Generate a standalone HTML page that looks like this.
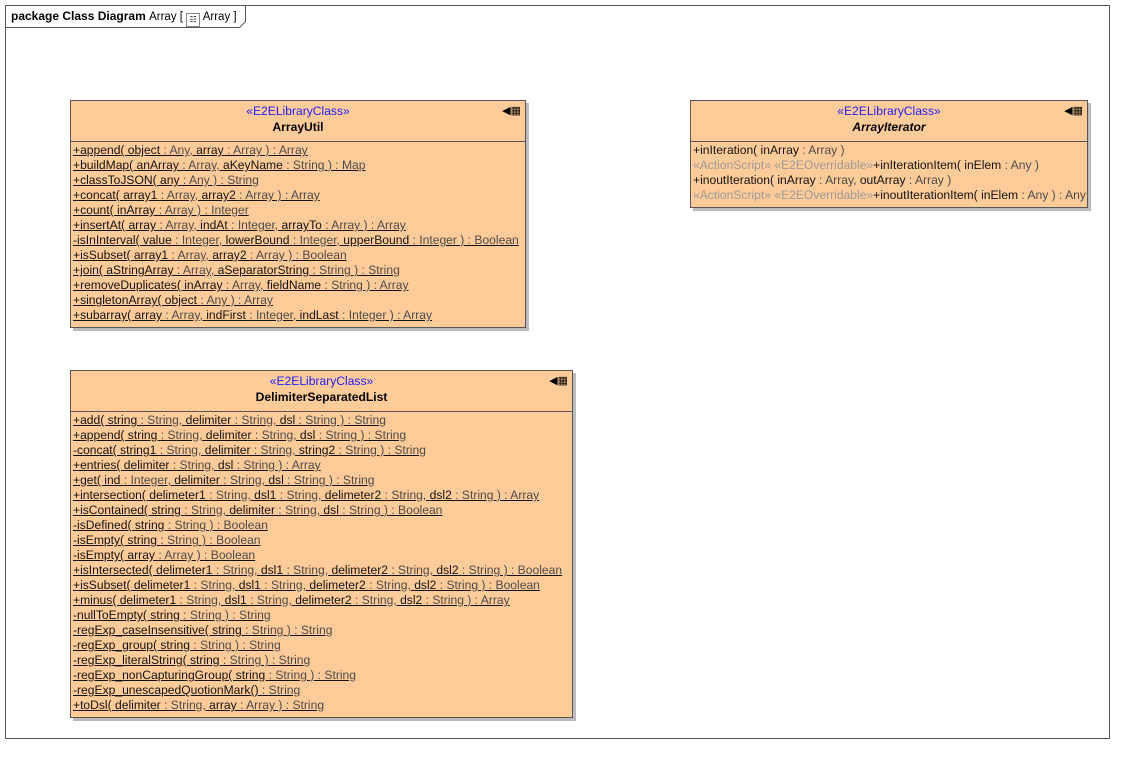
<!DOCTYPE html>
<html><head><meta charset="utf-8"><style>
body{margin:0;width:1134px;height:763px;background:#fff;font-family:"Liberation Sans",Arial,sans-serif;font-size:12.1px;position:relative;overflow:hidden}
.frame{position:absolute;left:5px;top:5px;width:1103px;height:732px;border:1px solid #555}
.tabsvg{position:absolute;left:5px;top:5px}
.tab{position:absolute;left:11px;top:6px;font-size:12px;line-height:20px;white-space:nowrap}
.cls{position:absolute;background:#ffcc99;border:1px solid #555;box-shadow:3px 3px 0 #bbb;box-sizing:border-box}
.hd{height:40px;border-bottom:1px solid #555;text-align:center;position:relative}
.st{color:#1a1aff;padding-top:3px;line-height:15px}
.nm{font-weight:bold;line-height:17px;color:#000}
.ic{position:absolute;right:4px;top:3px;font-size:11px}
.rows{padding:1px 0 0 2px}
.r{line-height:15px;height:15px;white-space:nowrap;color:#111}
.u{text-decoration:underline}
.g{color:#4a4a4a}
.s{color:#999}
</style></head><body>
<div class="frame"></div>
<svg class="tabsvg" width="245" height="24"><polyline points="0.5,22.5 234.5,22.5 240.5,16.5 240.5,0" fill="none" stroke="#555"/></svg>
<div class="tab"><b>package Class Diagram</b> <span style="font-size:11.5px">Array [ <span style="display:inline-block;width:12px;height:12px;border:1px solid #888;vertical-align:-2px;font-size:8px;line-height:12px;text-align:center">&#9783;</span> Array ]</span></div>

<div class="cls" style="left:70px;top:100px;width:456px;height:228px">
<div class="hd"><div class="st">«E2ELibraryClass»</div><div class="nm">ArrayUtil</div><div class="ic">&#9664;&#9638;</div></div>
<div class="rows">
<div class="r u">+append( object <span class="g">: Any, </span>array <span class="g">: Array ) : Array</span></div>
<div class="r u">+buildMap( anArray <span class="g">: Array, </span>aKeyName <span class="g">: String ) : Map</span></div>
<div class="r u">+classToJSON( any <span class="g">: Any ) : String</span></div>
<div class="r u">+concat( array1 <span class="g">: Array, </span>array2 <span class="g">: Array ) : Array</span></div>
<div class="r u">+count( inArray <span class="g">: Array ) : Integer</span></div>
<div class="r u">+insertAt( array <span class="g">: Array, </span>indAt <span class="g">: Integer, </span>arrayTo <span class="g">: Array ) : Array</span></div>
<div class="r u">-isInInterval( value <span class="g">: Integer, </span>lowerBound <span class="g">: Integer, </span>upperBound <span class="g">: Integer ) : Boolean</span></div>
<div class="r u">+isSubset( array1 <span class="g">: Array, </span>array2 <span class="g">: Array ) : Boolean</span></div>
<div class="r u">+join( aStringArray <span class="g">: Array, </span>aSeparatorString <span class="g">: String ) : String</span></div>
<div class="r u">+removeDuplicates( inArray <span class="g">: Array, </span>fieldName <span class="g">: String ) : Array</span></div>
<div class="r u">+singletonArray( object <span class="g">: Any ) : Array</span></div>
<div class="r u">+subarray( array <span class="g">: Array, </span>indFirst <span class="g">: Integer, </span>indLast <span class="g">: Integer ) : Array</span></div>
</div></div>

<div class="cls" style="left:690px;top:100px;width:398px;height:108px">
<div class="hd"><div class="st">«E2ELibraryClass»</div><div class="nm"><i>ArrayIterator</i></div><div class="ic">&#9664;&#9638;</div></div>
<div class="rows">
<div class="r">+inIteration( inArray <span class="g">: Array )</span></div>
<div class="r"><span class="s">«ActionScript» «E2EOverridable»</span>+inIterationItem( inElem <span class="g">: Any )</span></div>
<div class="r">+inoutIteration( inArray <span class="g">: Array, </span>outArray <span class="g">: Array )</span></div>
<div class="r"><span class="s">«ActionScript» «E2EOverridable»</span>+inoutIterationItem( inElem <span class="g">: Any ) : Any</span></div>
</div></div>

<div class="cls" style="left:70px;top:370px;width:503px;height:348px">
<div class="hd"><div class="st">«E2ELibraryClass»</div><div class="nm">DelimiterSeparatedList</div><div class="ic">&#9664;&#9638;</div></div>
<div class="rows">
<div class="r u">+add( string <span class="g">: String, </span>delimiter <span class="g">: String, </span>dsl <span class="g">: String ) : String</span></div>
<div class="r u">+append( string <span class="g">: String, </span>delimiter <span class="g">: String, </span>dsl <span class="g">: String ) : String</span></div>
<div class="r u">-concat( string1 <span class="g">: String, </span>delimiter <span class="g">: String, </span>string2 <span class="g">: String ) : String</span></div>
<div class="r u">+entries( delimiter <span class="g">: String, </span>dsl <span class="g">: String ) : Array</span></div>
<div class="r u">+get( ind <span class="g">: Integer, </span>delimiter <span class="g">: String, </span>dsl <span class="g">: String ) : String</span></div>
<div class="r u">+intersection( delimeter1 <span class="g">: String, </span>dsl1 <span class="g">: String, </span>delimeter2 <span class="g">: String, </span>dsl2 <span class="g">: String ) : Array</span></div>
<div class="r u">+isContained( string <span class="g">: String, </span>delimiter <span class="g">: String, </span>dsl <span class="g">: String ) : Boolean</span></div>
<div class="r u">-isDefined( string <span class="g">: String ) : Boolean</span></div>
<div class="r u">-isEmpty( string <span class="g">: String ) : Boolean</span></div>
<div class="r u">-isEmpty( array <span class="g">: Array ) : Boolean</span></div>
<div class="r u">+isIntersected( delimeter1 <span class="g">: String, </span>dsl1 <span class="g">: String, </span>delimeter2 <span class="g">: String, </span>dsl2 <span class="g">: String ) : Boolean</span></div>
<div class="r u">+isSubset( delimeter1 <span class="g">: String, </span>dsl1 <span class="g">: String, </span>delimeter2 <span class="g">: String, </span>dsl2 <span class="g">: String ) : Boolean</span></div>
<div class="r u">+minus( delimeter1 <span class="g">: String, </span>dsl1 <span class="g">: String, </span>delimeter2 <span class="g">: String, </span>dsl2 <span class="g">: String ) : Array</span></div>
<div class="r u">-nullToEmpty( string <span class="g">: String ) : String</span></div>
<div class="r u">-regExp_caseInsensitive( string <span class="g">: String ) : String</span></div>
<div class="r u">-regExp_group( string <span class="g">: String ) : String</span></div>
<div class="r u">-regExp_literalString( string <span class="g">: String ) : String</span></div>
<div class="r u">-regExp_nonCapturingGroup( string <span class="g">: String ) : String</span></div>
<div class="r u">-regExp_unescapedQuotionMark() <span class="g">: String</span></div>
<div class="r u">+toDsl( delimiter <span class="g">: String, </span>array <span class="g">: Array ) : String</span></div>
</div></div>
</body></html>
